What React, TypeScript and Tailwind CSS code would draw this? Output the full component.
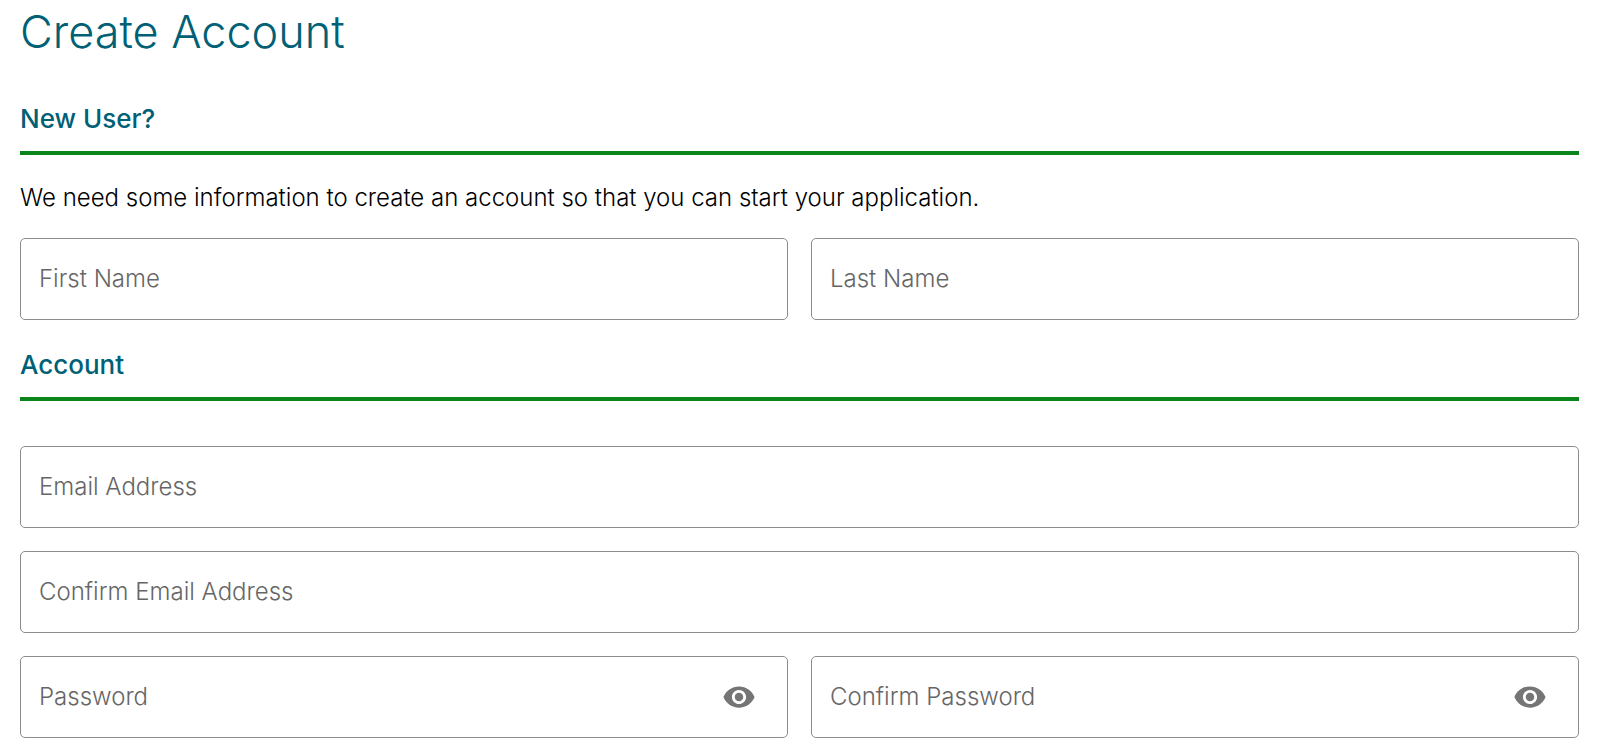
import { useId, useState } from "react";
import type { ReactNode } from "react";
import { MdVisibility, MdVisibilityOff } from "react-icons/md";

type FieldProps = { label: string; type?: string; autoComplete?: string; action?: ReactNode };

function TextField({ label, type = "text", autoComplete, action }: FieldProps) {
  const id = useId();
  return (
    <div className="flex h-[82px] min-w-0 rounded-[5px] border border-[#8c8c8c] bg-white focus-within:border-[#006075]">
      <div className="grid min-w-0 flex-1 items-center">
        <input
          id={id}
          type={type}
          placeholder=" "
          autoComplete={autoComplete}
          className="peer col-start-1 row-start-1 h-full w-full bg-transparent px-[18px] pt-4 text-2xl font-light text-black outline-none"
        />
        <label
          htmlFor={id}
          className="pointer-events-none col-start-1 row-start-1 self-start px-[18px] pt-1 text-base font-light text-[#666666] peer-placeholder-shown:self-center peer-placeholder-shown:pt-0 peer-placeholder-shown:text-2xl"
        >
          {label}
        </label>
      </div>
      {action}
    </div>
  );
}

function PasswordField({ label }: { label: string }) {
  const [visible, setVisible] = useState(false);
  const Icon = visible ? MdVisibilityOff : MdVisibility;
  return (
    <TextField
      label={label}
      type={visible ? "text" : "password"}
      autoComplete="new-password"
      action={
        <button
          type="button"
          aria-label={visible ? "Hide password" : "Show password"}
          onClick={() => setVisible(!visible)}
          className="mr-[31px] flex items-center text-[#757575]"
        >
          <Icon className="size-[34px]" />
        </button>
      }
    />
  );
}

function SectionTitle({ children }: { children: string }) {
  return (
    <h2 className="border-b-4 border-[#0b8519] pb-3.5 text-[26px] leading-9 font-medium text-[#006075]">
      {children}
    </h2>
  );
}

export default function App() {
  return (
    <main className="bg-white pr-[21px] pb-3 pl-5 font-['Inter','Liberation_Sans',sans-serif]">
      <h1 className="text-[45px] leading-[64px] font-light text-[#006075]">Create Account</h1>
      <form>
        <section className="mt-[37px]">
          <SectionTitle>New User?</SectionTitle>
          <p className="mt-[25px] text-2xl leading-9 font-light text-black">
            We need some information to create an account so that you can start your application.
          </p>
          <div className="mt-[22px] grid grid-cols-2 gap-[23px]">
            <TextField label="First Name" autoComplete="given-name" />
            <TextField label="Last Name" autoComplete="family-name" />
          </div>
        </section>
        <section className="mt-[27px]">
          <SectionTitle>Account</SectionTitle>
          <div className="mt-[45px] grid gap-[23px]">
            <TextField label="Email Address" type="email" autoComplete="email" />
            <TextField label="Confirm Email Address" type="email" autoComplete="email" />
            <div className="grid grid-cols-2 gap-[23px]">
              <PasswordField label="Password" />
              <PasswordField label="Confirm Password" />
            </div>
          </div>
        </section>
      </form>
    </main>
  );
}
